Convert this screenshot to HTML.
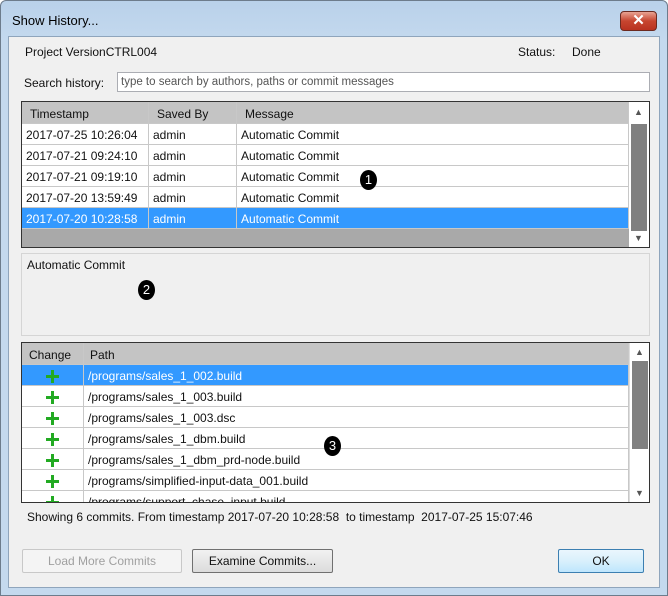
<!DOCTYPE html>
<html><head><style>
*{box-sizing:border-box;margin:0;padding:0}
body{width:668px;height:596px;overflow:hidden;background:#fff;font-family:"Liberation Sans",sans-serif;font-size:12px;color:#111;position:relative}
.a{position:absolute}
.frame{left:0;top:0;width:668px;height:596px;background:linear-gradient(#b9d1ea,#c4d9ee 40px,#c4d9ee);border:1px solid #6d7c8c;border-radius:6px 6px 0 0}
.client{left:8px;top:36px;width:652px;height:552px;background:#f0f0f0;border:1px solid #8fa5bc}
.cell{position:absolute;height:21px;line-height:19px;padding-top:2px;padding-left:4px;white-space:nowrap;border-right:1px solid #c8c8c8;border-bottom:1px solid #c8c8c8}
.hd{background:#c4c4c4;height:22px;line-height:20px;padding-left:8px}
.sel{background:#3399ff;color:#fff}
.badge{position:absolute;width:17px;height:20px;border-radius:50%;background:#000;color:#fff;text-align:center;line-height:20px;font-size:13px}
.plus{position:absolute;width:13px;height:13px}
.plus:before{content:"";position:absolute;left:5px;top:0;width:3px;height:13px;background:#22aa22}
.plus:after{content:"";position:absolute;left:0;top:5px;width:13px;height:3px;background:#22aa22}
.btn{position:absolute;height:24px;border:1px solid #707070;border-radius:2px;background:linear-gradient(#f2f2f2,#dcdcdc);text-align:center;line-height:22px;font-size:12px}
.sb{position:absolute;width:20px;background:#fff}
</style></head><body>
<div class="a frame"></div>
<div class="a" style="left:12px;top:13px;font-size:13px;color:#000">Show History...</div>
<div class="a" style="left:620px;top:11px;width:37px;height:20px;border:1px solid #6b2a20;border-radius:4px;background:linear-gradient(#e8a393,#c7452f 50%,#b93220);color:#fff;text-align:center;font-weight:bold;font-size:15px;line-height:18px">✕</div>
<div class="a client"></div>
<div class="a" style="left:25px;top:45px">Project VersionCTRL004</div>
<div class="a" style="left:518px;top:45px">Status:</div>
<div class="a" style="left:572px;top:45px">Done</div>
<div class="a" style="left:24px;top:76px">Search history:</div>
<div class="a" style="left:117px;top:72px;width:533px;height:20px;border:1px solid #abadb3;background:#fff;color:#555;padding-left:3px;line-height:18px;font-size:11.5px">type to search by authors, paths or commit messages</div>

<div class="a" style="left:21px;top:101px;width:629px;height:147px;border:1px solid #333;background:#a9a9a9;overflow:hidden">
 <div class="cell hd" style="left:0;top:0;width:127px">Timestamp</div>
 <div class="cell hd" style="left:127px;top:0;width:88px">Saved By</div>
 <div class="cell hd" style="left:215px;top:0;width:392px">Message</div>
 <div class="a" style="left:0;top:22px;width:607px;height:105px;background:#fff"></div>
 <div class="cell" style="left:0;top:22px;width:127px">2017-07-25 10:26:04</div><div class="cell" style="left:127px;top:22px;width:88px">admin</div><div class="cell" style="left:215px;top:22px;width:392px">Automatic Commit</div>
 <div class="cell" style="left:0;top:43px;width:127px">2017-07-21 09:24:10</div><div class="cell" style="left:127px;top:43px;width:88px">admin</div><div class="cell" style="left:215px;top:43px;width:392px">Automatic Commit</div>
 <div class="cell" style="left:0;top:64px;width:127px">2017-07-21 09:19:10</div><div class="cell" style="left:127px;top:64px;width:88px">admin</div><div class="cell" style="left:215px;top:64px;width:392px">Automatic Commit</div>
 <div class="cell" style="left:0;top:85px;width:127px">2017-07-20 13:59:49</div><div class="cell" style="left:127px;top:85px;width:88px">admin</div><div class="cell" style="left:215px;top:85px;width:392px">Automatic Commit</div>
 <div class="cell sel" style="left:0;top:106px;width:127px">2017-07-20 10:28:58</div><div class="cell sel" style="left:127px;top:106px;width:88px">admin</div><div class="cell sel" style="left:215px;top:106px;width:392px">Automatic Commit</div>
 <div class="sb" style="left:607px;top:0;height:145px"><div class="a" style="left:2px;top:22px;width:16px;height:107px;background:#808080"></div>
 <div class="a" style="left:5px;top:5px;font-size:9px;color:#555">▲</div><div class="a" style="left:5px;top:131px;font-size:9px;color:#555">▼</div></div>
</div>
<div class="badge" style="left:360px;top:170px">1</div>

<div class="a" style="left:21px;top:253px;width:629px;height:83px;border:1px solid #d5d5d5;background:#f0f0f0"></div>
<div class="a" style="left:27px;top:258px">Automatic Commit</div>
<div class="badge" style="left:138px;top:280px">2</div>

<div class="a" style="left:21px;top:342px;width:629px;height:161px;border:1px solid #333;background:#fff;overflow:hidden">
 <div class="cell hd" style="left:0;top:0;width:62px;padding-left:7px">Change</div>
 <div class="cell hd" style="left:62px;top:0;width:545px;padding-left:6px">Path</div>
 <div class="cell sel" style="left:0;top:22px;width:62px"></div><div class="cell sel" style="left:62px;top:22px;width:545px">/programs/sales_1_002.build</div>
 <div class="cell" style="left:0;top:43px;width:62px"></div><div class="cell" style="left:62px;top:43px;width:545px">/programs/sales_1_003.build</div>
 <div class="cell" style="left:0;top:64px;width:62px"></div><div class="cell" style="left:62px;top:64px;width:545px">/programs/sales_1_003.dsc</div>
 <div class="cell" style="left:0;top:85px;width:62px"></div><div class="cell" style="left:62px;top:85px;width:545px">/programs/sales_1_dbm.build</div>
 <div class="cell" style="left:0;top:106px;width:62px"></div><div class="cell" style="left:62px;top:106px;width:545px">/programs/sales_1_dbm_prd-node.build</div>
 <div class="cell" style="left:0;top:127px;width:62px"></div><div class="cell" style="left:62px;top:127px;width:545px">/programs/simplified-input-data_001.build</div>
 <div class="cell" style="left:0;top:148px;width:62px"></div><div class="cell" style="left:62px;top:148px;width:545px">/programs/support_chase_input.build</div>
 <div class="plus" style="left:24px;top:27px"></div><div class="plus" style="left:24px;top:48px"></div><div class="plus" style="left:24px;top:69px"></div><div class="plus" style="left:24px;top:90px"></div><div class="plus" style="left:24px;top:111px"></div><div class="plus" style="left:24px;top:132px"></div><div class="plus" style="left:24px;top:153px"></div>
 <div class="sb" style="left:607px;top:0;height:159px;border-left:1px solid #ddd"><div class="a" style="left:2px;top:18px;width:16px;height:88px;background:#808080"></div>
 <div class="a" style="left:5px;top:4px;font-size:9px;color:#555">▲</div><div class="a" style="left:5px;top:145px;font-size:9px;color:#555">▼</div></div>
</div>
<div class="badge" style="left:324px;top:436px">3</div>

<div class="a" style="left:27px;top:510px">Showing 6 commits. From timestamp 2017-07-20 10:28:58 &nbsp;to timestamp &nbsp;2017-07-25 15:07:46</div>

<div class="btn" style="left:22px;top:549px;width:160px;border-color:#c8c8c8;background:#f4f4f4;color:#a0a0a0">Load More Commits</div>
<div class="btn" style="left:192px;top:549px;width:141px">Examine Commits...</div>
<div class="btn" style="left:558px;top:549px;width:86px;border-color:#3c7fb1;background:linear-gradient(#eaf6fd,#d9f0fc 50%,#bee6fd)">OK</div>
</body></html>
